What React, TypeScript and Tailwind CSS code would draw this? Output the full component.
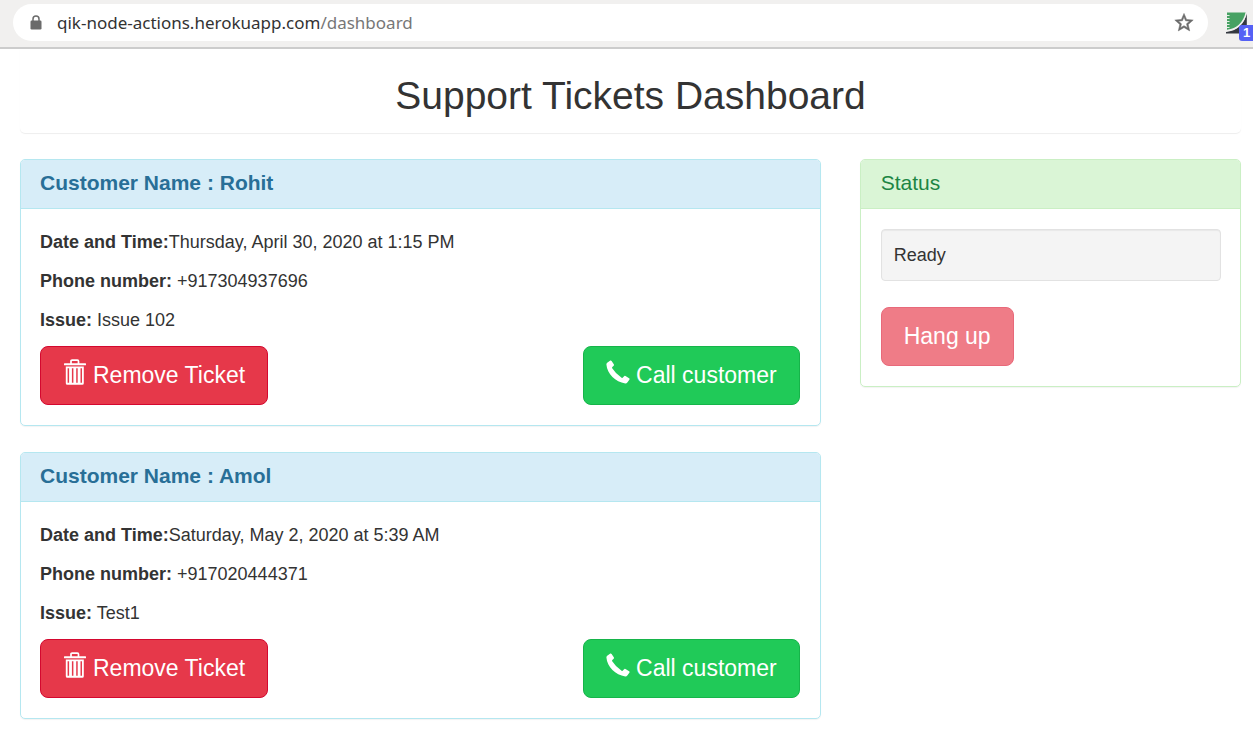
import React from "react";

type Ticket = { name: string; date: string; phone: string; issue: string };

const tickets: Ticket[] = [
  { name: "Rohit", date: "Thursday, April 30, 2020 at 1:15 PM", phone: "+917304937696", issue: "Issue 102" },
  { name: "Amol", date: "Saturday, May 2, 2020 at 5:39 AM", phone: "+917020444371", issue: "Test1" },
];

const largeButton =
  "flex h-[59px] items-center gap-1.5 rounded-lg border px-[22px] pb-0.5 text-[23px] leading-8 text-white";

function LockIcon() {
  return (
    <svg className="shrink-0" width="12" height="16" viewBox="0 0 12 16" aria-hidden="true">
      <rect x="0.5" y="5.5" width="11" height="9" rx="1.2" fill="#6b6b6b" />
      <path d="M3 6.5V4a3 3 0 0 1 6 0v2.500" fill="none" stroke="#6b6b6b" strokeWidth="1.5" />
    </svg>
  );
}

function StarIcon() {
  return (
    <svg width="24" height="24" viewBox="0 0 24 24" fill="#6b6b6b" stroke="#6b6b6b" strokeWidth="0.5" aria-hidden="true">
      <path d="M21.200 9.100l-6.600-.6L12 2.400 9.400 8.500l-6.600.6 5 4.350L6.300 19.900 12 16.500l5.700 3.400-1.500-6.450zM12 14.650l-3.450 2.050.92-3.900-3.050-2.650 4.020-.35L12 6.100l1.560 3.700 4.020.35-3.050 2.650.92 3.900z" />
    </svg>
  );
}

function ExtensionIcon() {
  return (
    <svg width="22" height="22" viewBox="0 0 22 22" aria-hidden="true">
      <path d="M1 0.500h19C18 11 12 17 1 18z" fill="#47a163" />
      <path d="M20.800 0.500V21.500H0V20C11 19 18.500 12 20.800 0.500z" fill="#343840" />
      <path d="M20.500 0C18 11 11.500 17.500 0 18.700" fill="none" stroke="#f1f0ef" strokeWidth="1.500" />
      <path d="M1 3.500h2.500M1 6.500h2.500M1 9.500h2.500M1 12.500h2.500M1 15.500h2.500" stroke="#e4efe6" strokeWidth="1" />
    </svg>
  );
}

function TrashIcon() {
  return (
    <svg className="mb-1.5" width="24" height="26" viewBox="0 0 24 26" aria-hidden="true">
      <path d="M8 5V2.300Q8 1.200 9.100 1.200H14.400Q15.500 1.200 15.500 2.300V5" fill="none" stroke="#fff" strokeWidth="1.700" />
      <rect x="1" y="4.300" width="22" height="1.900" rx="0.500" fill="#fff" />
      <path
        fill="#fff"
        fillRule="evenodd"
        d="M2.800 7.500h18v16.800q0 1.500-1.500 1.500H4.300q-1.500 0-1.500-1.500zM4.600 9.300v14.500h1.500V9.300zM8.900 9.300v14.500h1.500V9.300zM13.200 9.300v14.500h1.500V9.300zM17.500 9.300v14.500h1.500V9.300z"
      />
    </svg>
  );
}

function PhoneIcon() {
  return (
    <svg className="mb-1.5" width="24" height="24" viewBox="0 0 24 24" fill="#fff" aria-hidden="true">
      <path d="M1.200 2.800L4.300.6Q5 .2 5.600.9L7.800 4.300q.5.800-.1 1.400L6.300 7.100q-.5.500-.1 1.200Q9.800 14 15.600 17.700q.8.500 1.300-.1l1.200-1.400q.6-.6 1.400-.1l3.600 2.100q.8.500.4 1.200l-2.200 3.100q-.8 1-2 .9C9.500 22 1.200 14 .4 4.500q0-1.100.8-1.700z" />
    </svg>
  );
}

function BrowserBar() {
  return (
    <header className="flex items-center gap-[18px] overflow-hidden border-b-2 border-[#cccccc] bg-[#f1f0ef] pt-1 pb-[6px] pl-[13px]">
      <div className="flex h-[37px] min-w-0 flex-1 items-center gap-[15px] rounded-full bg-white pr-3 pl-[17px]">
        <LockIcon />
        <a href="#dashboard" className="flex-1 truncate font-['Noto_Sans',sans-serif] text-[17px] leading-6 text-[#333333]">
          qik-node-actions.herokuapp.com<span className="text-[#777777]">/dashboard</span>
        </a>
        <button type="button" aria-label="Bookmark">
          <StarIcon />
        </button>
      </div>
      <button type="button" aria-label="Extension" className="relative w-[27px]">
        <ExtensionIcon />
        <span className="absolute top-[13px] left-[13px] h-4 w-5 rounded-[3px] bg-[#5561f5] pl-1 text-left text-[13px] leading-4 font-bold text-white">
          1
        </span>
      </button>
    </header>
  );
}

function Detail({ label, children }: { label: string; children: React.ReactNode }) {
  return (
    <p className="mb-[13px]">
      <b>{label}</b>
      {children}
    </p>
  );
}

function TicketPanel({ ticket }: { ticket: Ticket }) {
  return (
    <article className="rounded-[5px] border border-[#b5e7f0] shadow-[0_1px_1px_rgba(0,0,0,0.05)]">
      <h2 className="rounded-t border-b border-[#b5e7f0] bg-[#d7edf8] px-[19px] pt-[11px] pb-[13px] text-[21px] leading-6 font-bold text-[#286f97]">
        Customer Name : {ticket.name}
      </h2>
      <div className="px-[19px] py-5">
        <Detail label="Date and Time:">{ticket.date}</Detail>
        <Detail label="Phone number:"> {ticket.phone}</Detail>
        <Detail label="Issue:"> {ticket.issue}</Detail>
        <div className="flex justify-between pr-px">
          <button type="button" className={`${largeButton} border-[#d4082f] bg-[#e6384a]`}>
            <TrashIcon />
            Remove Ticket
          </button>
          <button type="button" className={`${largeButton} border-[#16b44a] bg-[#20ca58]`}>
            <PhoneIcon />
            Call customer
          </button>
        </div>
      </div>
    </article>
  );
}

function StatusPanel() {
  return (
    <aside className="rounded-[5px] border border-[#caefc4] shadow-[0_1px_1px_rgba(0,0,0,0.05)]">
      <h2 className="rounded-t border-b border-[#caefc4] bg-[#daf5d6] px-5 pt-[11px] pb-[13px] text-[21px] leading-6 text-[#1d8544]">
        Status
      </h2>
      <div className="py-5 pr-[19px] pl-5">
        <div
          role="status"
          className="mb-[26px] rounded border border-[#e2e2e2] bg-[#f4f4f4] px-3 py-3 shadow-[inset_0_1px_1px_rgba(0,0,0,0.05)]"
        >
          Ready
        </div>
        <button type="button" disabled className={`${largeButton} border-[#e8697a] bg-[#ef7c87]`}>
          Hang up
        </button>
      </div>
    </aside>
  );
}

export default function App() {
  return (
    <div className="min-h-screen bg-white font-['Liberation_Sans',Arial,sans-serif] text-[18px] leading-[26px] text-[#333333]">
      <BrowserBar />
      <main className="pr-3 pb-3 pl-5">
        <div className="mb-[26px] rounded-b-[5px] pt-[25px] pb-4 shadow-[0_1px_1px_rgba(0,0,0,0.07)]">
          <h1 className="text-center text-[39px] leading-[43px]">Support Tickets Dashboard</h1>
        </div>
        <div className="grid grid-cols-[minmax(0,21fr)_minmax(0,10fr)] items-start gap-[39px]">
          <section className="flex flex-col gap-[26px]">
            {tickets.map((ticket) => (
              <TicketPanel key={ticket.name} ticket={ticket} />
            ))}
          </section>
          <StatusPanel />
        </div>
      </main>
    </div>
  );
}
